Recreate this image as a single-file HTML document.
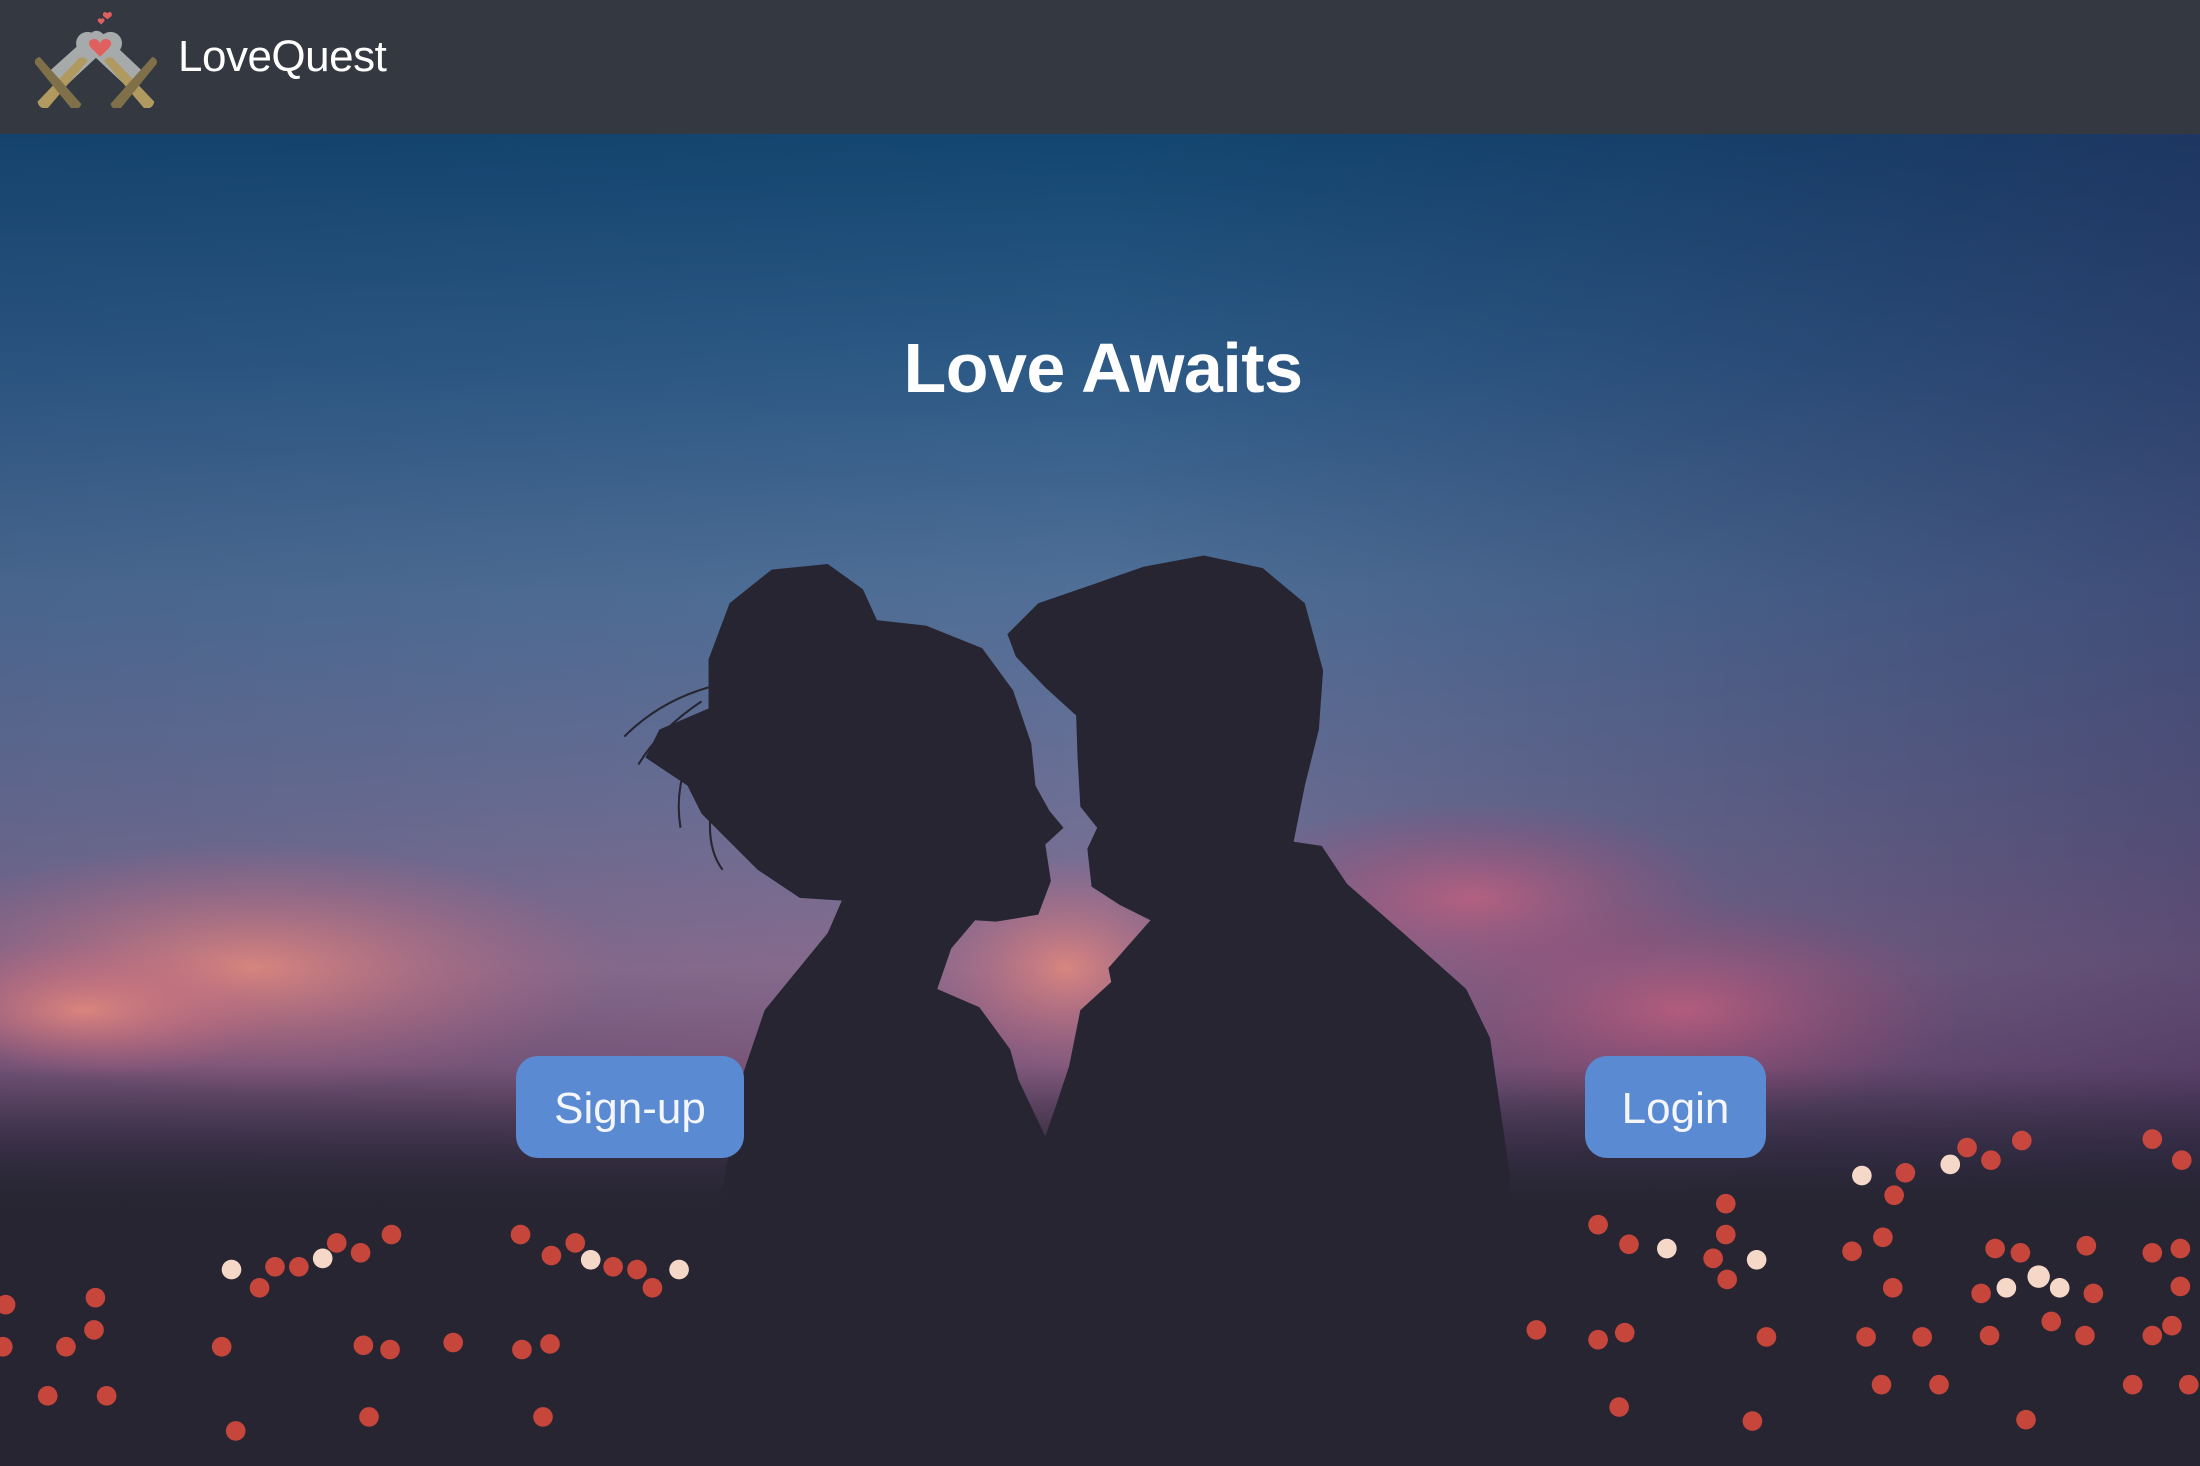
<!DOCTYPE html>
<html><head><meta charset="utf-8"><style>
html,body{margin:0;padding:0;width:2200px;height:1466px;overflow:hidden;background:#262531;font-family:"Liberation Sans","DejaVu Sans",sans-serif}
.bg{position:absolute;left:0;top:0;width:2200px;height:1466px}
.hdr{position:absolute;left:0;top:0;width:2200px;height:134px;background:#343841}
.brand{position:absolute;left:178px;top:32px;font-size:44px;color:#fff;letter-spacing:-0.5px}
h1{position:absolute;left:0;width:2206px;top:328px;margin:0;text-align:center;font-size:70px;font-weight:bold;color:#fff;letter-spacing:-0.5px}
.btn{position:absolute;top:1056px;height:102px;background:#5a8ad2;border-radius:22px;color:#f4f6fb;font-size:44px;line-height:106px;text-align:center}
</style></head><body>
<svg class="bg" viewBox="0 0 1568 1045" preserveAspectRatio="none">
<defs>
<linearGradient id="sky" x1="0" y1="0" x2="0" y2="1">
<stop offset="0.09" stop-color="#124670"/>
<stop offset="0.25" stop-color="#2d5a86"/>
<stop offset="0.4" stop-color="#4f6f97"/>
<stop offset="0.55" stop-color="#6d6f95"/>
<stop offset="0.66" stop-color="#8a6d8f"/>
<stop offset="0.74" stop-color="#7a5478"/>
<stop offset="0.8" stop-color="#4a3658"/>
<stop offset="0.86" stop-color="#2c2838"/>
<stop offset="1" stop-color="#262531"/>
</linearGradient>
<linearGradient id="side" x1="0" y1="0" x2="1" y2="0">
<stop offset="0" stop-color="#1a2c55" stop-opacity="0.15"/>
<stop offset="0.5" stop-color="#1a2c55" stop-opacity="0"/>
<stop offset="1" stop-color="#2a2350" stop-opacity="0.45"/>
</linearGradient>
<linearGradient id="gnd" x1="0" y1="0" x2="0" y2="1">
<stop offset="0" stop-color="#262531" stop-opacity="0"/>
<stop offset="0.35" stop-color="#262531" stop-opacity="1"/>
<stop offset="1" stop-color="#262531"/>
</linearGradient>
<radialGradient id="p1" cx="0.5" cy="0.5" r="0.5"><stop offset="0" stop-color="#e68a7c" stop-opacity="0.85"/><stop offset="1" stop-color="#c06080" stop-opacity="0"/></radialGradient>
<radialGradient id="p2" cx="0.5" cy="0.5" r="0.5"><stop offset="0" stop-color="#d0607e" stop-opacity="0.7"/><stop offset="1" stop-color="#a04070" stop-opacity="0"/></radialGradient>
</defs>
<rect width="1568" height="1045" fill="url(#sky)"/>
<rect width="1568" height="1045" fill="url(#side)"/>
<ellipse cx="180" cy="690" rx="260" ry="90" fill="url(#p1)"/>
<ellipse cx="60" cy="720" rx="140" ry="50" fill="url(#p1)"/>
<ellipse cx="760" cy="690" rx="110" ry="80" fill="url(#p1)"/>
<ellipse cx="1200" cy="720" rx="200" ry="80" fill="url(#p2)"/>
<ellipse cx="1050" cy="640" rx="180" ry="70" fill="url(#p2)"/>
<rect x="0" y="760" width="1568" height="285" fill="url(#gnd)"/>
<path fill="#262531" d="M510,880 L528,770 545,720 590,665 600,642 570,640 540,620 520,600 500,580 490,560 460,540 470,520 505,505 505,470 520,430 550,406 590,402 615,420 625,442 660,446 700,462 722,492 735,530 738,560 748,578 758,590 745,602 749,628 740,652 710,657 695,656 678,676 668,705 698,718 720,748 726,770 745,810 752,790 762,760 770,720 792,700 790,690 820,656 798,645 778,632 775,605 782,590 770,575 768,540 767,510 745,490 724,468 718,452 740,430 775,418 815,404 858,396 900,405 930,430 943,478 940,520 930,560 922,600 942,603 960,630 1000,665 1045,705 1062,740 1075,830 1080,880Z"/>
<path fill="none" stroke="#262531" stroke-width="1.5" d="M505,490 Q470,500 445,525 M500,500 Q470,520 455,545 M495,530 Q480,560 485,590 M510,560 Q500,600 515,620"/>
<g fill="#d84a3e" opacity="0.9">
<circle cx="196" cy="903" r="7"/><circle cx="213" cy="903" r="7"/><circle cx="240" cy="886" r="7"/><circle cx="257" cy="893" r="7"/><circle cx="279" cy="880" r="7"/><circle cx="68" cy="925" r="7"/><circle cx="67" cy="948" r="7"/><circle cx="47" cy="960" r="7"/><circle cx="4" cy="930" r="7"/><circle cx="2" cy="960" r="7"/><circle cx="34" cy="995" r="7"/><circle cx="76" cy="995" r="7"/><circle cx="158" cy="960" r="7"/><circle cx="168" cy="1020" r="7"/><circle cx="263" cy="1010" r="7"/><circle cx="278" cy="962" r="7"/><circle cx="259" cy="959" r="7"/><circle cx="323" cy="957" r="7"/><circle cx="372" cy="962" r="7"/><circle cx="392" cy="958" r="7"/><circle cx="371" cy="880" r="7"/><circle cx="393" cy="895" r="7"/><circle cx="410" cy="886" r="7"/><circle cx="437" cy="903" r="7"/><circle cx="454" cy="905" r="7"/><circle cx="465" cy="918" r="7"/><circle cx="387" cy="1010" r="7"/><circle cx="185" cy="918" r="7"/>
<circle cx="1139" cy="873" r="7"/><circle cx="1161" cy="887" r="7"/><circle cx="1221" cy="897" r="7"/><circle cx="1230" cy="880" r="7"/><circle cx="1230" cy="858" r="7"/><circle cx="1231" cy="912" r="7"/><circle cx="1139" cy="955" r="7"/><circle cx="1158" cy="950" r="7"/><circle cx="1095" cy="948" r="7"/><circle cx="1154" cy="1003" r="7"/><circle cx="1249" cy="1013" r="7"/><circle cx="1259" cy="953" r="7"/><circle cx="1358" cy="836" r="7"/><circle cx="1350" cy="852" r="7"/><circle cx="1402" cy="818" r="7"/><circle cx="1419" cy="827" r="7"/><circle cx="1441" cy="813" r="7"/><circle cx="1320" cy="892" r="7"/><circle cx="1342" cy="882" r="7"/><circle cx="1349" cy="918" r="7"/><circle cx="1330" cy="953" r="7"/><circle cx="1370" cy="953" r="7"/><circle cx="1341" cy="987" r="7"/><circle cx="1382" cy="987" r="7"/><circle cx="1422" cy="890" r="7"/><circle cx="1440" cy="893" r="7"/><circle cx="1487" cy="888" r="7"/><circle cx="1412" cy="922" r="7"/><circle cx="1492" cy="922" r="7"/><circle cx="1418" cy="952" r="7"/><circle cx="1462" cy="942" r="7"/><circle cx="1486" cy="952" r="7"/><circle cx="1444" cy="1012" r="7"/><circle cx="1534" cy="893" r="7"/><circle cx="1554" cy="890" r="7"/><circle cx="1534" cy="812" r="7"/><circle cx="1555" cy="827" r="7"/><circle cx="1554" cy="917" r="7"/><circle cx="1548" cy="945" r="7"/><circle cx="1534" cy="952" r="7"/><circle cx="1520" cy="987" r="7"/><circle cx="1560" cy="987" r="7"/>
</g>
<g fill="#f6d8c8">
<circle cx="165" cy="905" r="7"/><circle cx="230" cy="897" r="7"/><circle cx="421" cy="898" r="7"/><circle cx="484" cy="905" r="7"/><circle cx="1188" cy="890" r="7"/><circle cx="1252" cy="898" r="7"/><circle cx="1327" cy="838" r="7"/><circle cx="1390" cy="830" r="7"/><circle cx="1430" cy="918" r="7"/><circle cx="1453" cy="910" r="8"/><circle cx="1468" cy="918" r="7"/>
</g>
</svg>
<div class="hdr">
<svg style="position:absolute;left:26px;top:12px" width="144" height="96" viewBox="4 0 128 92">
<path d="M20,58 L60,22 Q66,14 74,22 L112,58 L96,72 L66,44 L36,72Z" fill="#a7aaab"/>
<ellipse cx="58" cy="30" rx="11" ry="11" fill="#a7aaab"/><ellipse cx="80" cy="30" rx="11" ry="11" fill="#a7aaab"/>
<path d="M70,43 L61,34 Q57,28 63,26 Q68,25 70,30 Q72,25 77,26 Q83,28 79,34Z" fill="#e06060"/>
<path d="M71,12 l-3,-3 q-1,-3 2,-3 l1,1 l1,-1 q3,0 2,3Z" fill="#e06060"/>
<path d="M77,7 l-4,-3 q-1,-4 2,-4 l2,1 l2,-1 q3,0 2,4Z" fill="#e06060"/>
<path d="M10,86 L50,44 Q55,42 58,47 L20,92 Q12,94 10,86Z" fill="#b09a60"/>
<path d="M8,50 Q6,45 12,43 L52,88 Q50,95 42,92Z" fill="#80704a"/>
<path d="M122,86 L82,44 Q77,42 74,47 L112,92 Q120,94 122,86Z" fill="#b09a60"/>
<path d="M124,50 Q126,45 120,43 L80,88 Q82,95 90,92Z" fill="#80704a"/>
</svg>
<div class="brand">LoveQuest</div>
</div>
<h1>Love Awaits</h1>
<div class="btn" style="left:516px;width:228px">Sign-up</div>
<div class="btn" style="left:1585px;width:181px">Login</div>
</body></html>
